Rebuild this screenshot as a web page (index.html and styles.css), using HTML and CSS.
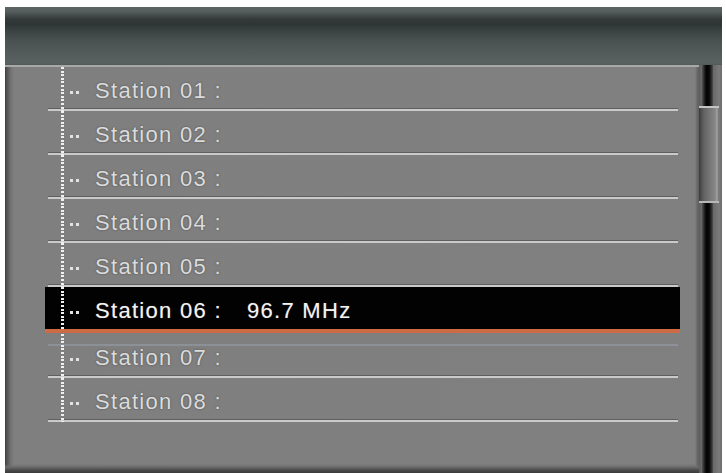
FILE: index.html
```html
<!DOCTYPE html>
<html>
<head>
<meta charset="utf-8">
<link rel="stylesheet" href="styles.css">
</head>
<body>
<div class="frame">
  <div class="header"></div>
  <div class="main">
    <div class="panel">
      <div class="list">
        <div class="row"><span class="tree"></span><span class="label">Station 01 :</span></div>
        <div class="row"><span class="tree"></span><span class="label">Station 02 :</span></div>
        <div class="row"><span class="tree"></span><span class="label">Station 03 :</span></div>
        <div class="row"><span class="tree"></span><span class="label">Station 04 :</span></div>
        <div class="row"><span class="tree"></span><span class="label">Station 05 :</span></div>
        <div class="row selected"><span class="tree"></span><span class="label">Station 06 :<span class="freq">96.7 MHz</span></span></div>
        <div class="row"><span class="tree"></span><span class="label">Station 07 :</span></div>
        <div class="row"><span class="tree"></span><span class="label">Station 08 :</span></div>
      </div>
    </div>
    <div class="scrollbar">
      <div class="track track-top"></div>
      <div class="thumb"></div>
      <div class="track track-bottom"></div>
    </div>
  </div>
</div>
</body>
</html>
```
FILE: styles.css
```css
html, body {
  margin: 0;
  padding: 0;
  background: #ffffff;
}
body {
  width: 726px;
  height: 473px;
  overflow: hidden;
  font-family: "Liberation Sans", Arial, sans-serif;
}
.frame {
  margin: 7px 0 0 5px;
  width: 717px;
  height: 466px;
  display: flex;
  flex-direction: column;
  background: #6c6c6c;
}
.header {
  height: 58px;
  flex: none;
  background: linear-gradient(to bottom,
    #5f6666 0px, #555c5c 5px, #343a3a 12px, #2f3535 17px,
    #3d4444 25px, #4a5151 34px, #535a5a 46px, #5a6161 56px, #535959 58px);
}
.main {
  flex: 1;
  display: flex;
  min-height: 0;
}
.panel {
  width: 694px;
  flex: none;
  border-top: 2px solid #a9a9a9;
  background:
    linear-gradient(to top, #3a3a3a 0px, #4c4c4c 3px, #6c6c6c 6px, rgba(127,127,127,0) 9px),
    linear-gradient(to right, #3f3f3f 0px, #5c5c5c 3px, #747474 6px, #7f7f7f 9px, #808080 690px, #6a6a6a 692px, #5e5e5e 694px);
  display: flex;
  flex-direction: column;
}
.list {
  margin-left: 40px;
  width: 635px;
  display: flex;
  flex-direction: column;
}
.row {
  height: 44px;
  display: flex;
  align-items: flex-start;
  background:
    linear-gradient(#5f5f5f, #5f5f5f) 3px calc(100% - 2px) / calc(100% - 5px) 1px no-repeat,
    linear-gradient(#cacaca, #cacaca) 3px 100% / calc(100% - 5px) 2px no-repeat;
}
.row.selected {
  height: 42px;
  background: #020202;
  border-bottom: 4px solid #cd6b45;
  margin-bottom: 1px;
}
.selected + .row {
  background:
    linear-gradient(rgba(150,160,172,0.55), rgba(150,160,172,0.55)) 3px 10px / calc(100% - 5px) 2px no-repeat,
    linear-gradient(#5f5f5f, #5f5f5f) 3px calc(100% - 2px) / calc(100% - 5px) 1px no-repeat,
    linear-gradient(#cacaca, #cacaca) 3px 100% / calc(100% - 5px) 2px no-repeat;
}
.tree {
  width: 50px;
  flex: none;
  align-self: stretch;
  background:
    repeating-linear-gradient(to bottom, #f0f0f0 0px, #f0f0f0 2px, rgba(0,0,0,0) 2px, rgba(0,0,0,0) 3.6px) 16px 0 / 3px 100% no-repeat,
    linear-gradient(#e2e2e2, #e2e2e2) 25px 24px / 3px 3px no-repeat,
    linear-gradient(#e2e2e2, #e2e2e2) 31px 24px / 3px 3px no-repeat;
}
.label {
  padding-top: 5px;
  line-height: 37px;
  font-size: 22px;
  letter-spacing: 1.3px;
  color: #dcdcdc;
  text-shadow: 0 0 2px rgba(60, 60, 60, 0.8);
  white-space: nowrap;
}
.selected .label {
  color: #f2f2f2;
  text-shadow: 0 0 1px rgba(255, 255, 255, 0.4);
}
.freq {
  margin-left: 25px;
}
.scrollbar {
  flex: 1;
  display: flex;
  flex-direction: column;
  background: linear-gradient(to right, #5c5c5c 0px, #6a6a6a 3px, #6a6a6a 15px, #7a7a7a 20px, #6c6c6c 23px);
}
.track {
  width: 11px;
  margin-left: 3px;
  background: linear-gradient(to right, #555555 0px, #161616 3px, #000000 5px, #121212 8px, #505050 11px);
}
.track-top {
  height: 41px;
  flex: none;
}
.thumb {
  width: 20px;
  height: 93px;
  flex: none;
  border-top: 2px solid #c4c4c4;
  border-bottom: 2px solid #b8b8b8;
  background: linear-gradient(to right, #3a3a3a 0px, #4e4e4e 2px, #636363 5px, #747474 10px, #868686 16px, #a2a2a2 18px, #6e6e6e 20px);
}
.track-bottom {
  flex: 1;
}
```
